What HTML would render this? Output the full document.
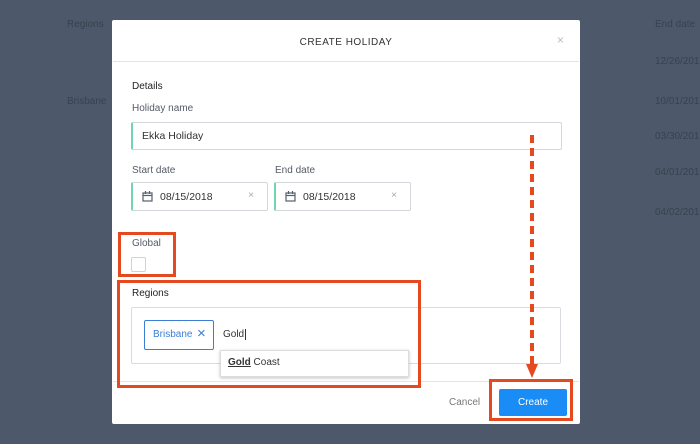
<!DOCTYPE html><html><head><style>
body{margin:0;width:700px;height:444px;background:#4d586b;font-family:"Liberation Sans",sans-serif;position:relative;overflow:hidden}
.a{position:absolute}
.bg{color:#38424f;font-size:10px}
.m{left:112px;top:20px;width:468px;height:404px;background:#fff;border-radius:2px}
.lbl{font-size:10px;color:#555b66}
.inp{border:1px solid #d3d6db;border-left:2px solid #6fd6b0;border-radius:2px;background:#fff;font-size:10.5px;color:#333}
.r{border:3px solid #e5491f}
</style></head><body>
<div class="a bg" style="left:67px;top:19px">Regions</div>
<div class="a bg" style="left:67px;top:96px">Brisbane</div>
<div class="a bg" style="left:655px;top:19px">End date</div>
<div class="a bg" style="left:655px;top:56px">12/26/2017</div>
<div class="a bg" style="left:655px;top:96px">10/01/2017</div>
<div class="a bg" style="left:655px;top:131px">03/30/2018</div>
<div class="a bg" style="left:655px;top:167px">04/01/2018</div>
<div class="a bg" style="left:655px;top:207px">04/02/2018</div>
<div class="a m"></div>
<div class="a" style="left:112px;top:37px;width:468px;text-align:center;font-size:10px;letter-spacing:.5px;color:#333">CREATE HOLIDAY</div>
<div class="a" style="left:557px;top:33px;color:#bbb;font-size:12px">×</div>
<div class="a" style="left:113px;top:61px;width:466px;height:1px;background:#e2e4e8"></div>
<div class="a" style="left:132px;top:81px;font-size:10px;color:#222">Details</div>
<div class="a lbl" style="left:132px;top:103px">Holiday name</div>
<div class="a inp" style="left:131px;top:122px;width:428px;height:26px"><span style="position:absolute;left:9px;top:7px">Ekka Holiday</span></div>
<div class="a lbl" style="left:132px;top:165px">Start date</div>
<div class="a lbl" style="left:275px;top:165px">End date</div>
<div class="a inp" style="left:131px;top:182px;width:134px;height:27px"><svg class="a" style="left:9px;top:8px" width="11" height="11" viewBox="0 0 11 11" fill="none" stroke="#555e6e" stroke-width="1.2"><rect x="1" y="2" width="9" height="8"/><line x1="1" y1="4.5" x2="10" y2="4.5"/><line x1="3.5" y1="0" x2="3.5" y2="3"/><line x1="7.5" y1="0" x2="7.5" y2="3"/></svg><span style="position:absolute;left:27px;top:8px">08/15/2018</span><span style="position:absolute;left:115px;top:6px;color:#aaa">×</span></div>
<div class="a inp" style="left:274px;top:182px;width:134px;height:27px"><svg class="a" style="left:9px;top:8px" width="11" height="11" viewBox="0 0 11 11" fill="none" stroke="#555e6e" stroke-width="1.2"><rect x="1" y="2" width="9" height="8"/><line x1="1" y1="4.5" x2="10" y2="4.5"/><line x1="3.5" y1="0" x2="3.5" y2="3"/><line x1="7.5" y1="0" x2="7.5" y2="3"/></svg><span style="position:absolute;left:27px;top:8px">08/15/2018</span><span style="position:absolute;left:115px;top:6px;color:#aaa">×</span></div>
<div class="a lbl" style="left:132px;top:238px">Global</div>
<div class="a" style="left:131px;top:257px;width:13px;height:13px;border:1px solid #cfd2d8;border-radius:2px"></div>
<div class="a" style="left:132px;top:288px;font-size:10px;color:#222">Regions</div>
<div class="a" style="left:131px;top:307px;width:428px;height:55px;border:1px solid #d8dbe0;border-radius:2px"></div>
<div class="a" style="left:144px;top:320px;width:68px;height:28px;border:1px solid #3b7fd4;border-radius:2px;font-size:10px;color:#3b7fd4"><span style="position:absolute;left:8px;top:8px">Brisbane</span><span style="position:absolute;left:52px;top:4px;font-size:15px">×</span></div>
<div class="a" style="left:223px;top:329px;font-size:10px;color:#333">Gold<span style="border-left:1px solid #333;margin-left:1px"></span></div>
<div class="a" style="left:220px;top:350px;width:187px;height:25px;background:#fff;border:1px solid #ddd;box-shadow:0 1px 3px rgba(0,0,0,.25);font-size:10px;color:#333"><span style="position:absolute;left:7px;top:6px"><b style="text-decoration:underline">Gold</b> Coast</span></div>
<div class="a" style="left:113px;top:381px;width:466px;height:1px;background:#e2e4e8"></div>
<div class="a" style="left:449px;top:397px;font-size:10px;color:#777">Cancel</div>
<div class="a" style="left:499px;top:389px;width:68px;height:27px;background:#1a8cf5;border-radius:2px;color:#fff;font-size:10px;text-align:center;line-height:27px">Create</div>
<div class="a r" style="left:118px;top:232px;width:52px;height:39px"></div>
<div class="a r" style="left:117px;top:280px;width:298px;height:102px"></div>
<div class="a r" style="left:489px;top:379px;width:78px;height:36px"></div>
<svg class="a" style="left:526px;top:135px" width="14" height="245"><line x1="6" y1="0" x2="6" y2="230" stroke="#e5491f" stroke-width="4" stroke-dasharray="8,5"/><polygon points="0,229 12,229 6,243" fill="#e5491f"/></svg>
</body></html>
